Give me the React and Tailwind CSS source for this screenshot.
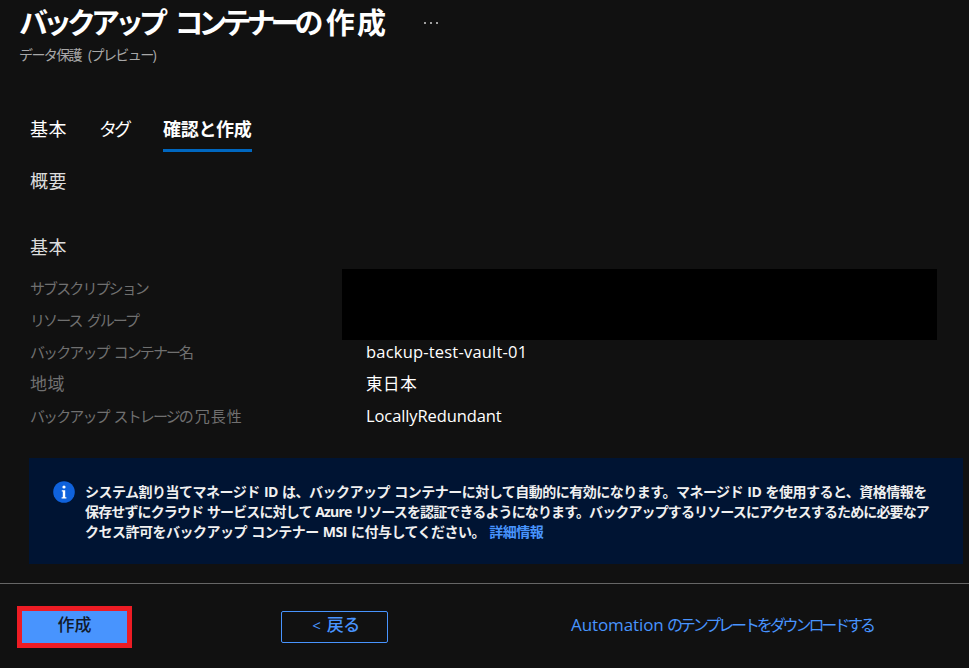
const FONT = "font-['Open_Sans','Noto_Sans_CJK_JP',sans-serif]";

function Row({ label, value, valueClass = "tracking-[0.1px]" }) {
  return (
    <div className="flex h-8 items-center">
      <div className="w-[336px] text-[15px] tracking-[-1.9px] whitespace-pre text-[#707070] [word-spacing:3px]">{label}</div>
      <div className={`text-[16.5px] text-white ${valueClass}`}>{value}</div>
    </div>
  );
}

export default function App() {
  return (
    <div className={`${FONT} flex h-[668px] w-[969px] flex-col overflow-hidden bg-[#111111] text-white`}>
      <header className="flex items-start pl-[19px]">
        <div className="w-[367px]">
          <h1 className="h-[45px] text-[29px] leading-[45px] font-bold whitespace-pre">
            <span className="tracking-[-5px] [word-spacing:9px]">バックアップ コンテナー</span>
            <span className="tracking-[2.2px]">の作成</span>
          </h1>
          <p className="text-[14px] leading-[20px] tracking-[-1.6px] whitespace-pre text-[#a8a8a8] [word-spacing:5px]">データ保護 (プレビュー)</p>
        </div>
        <div className="ml-[38px] flex h-[45px] items-center gap-[4px]">
          <span className="size-[2px] rounded-full bg-[#d0d0d0]" />
          <span className="size-[2px] rounded-full bg-[#d0d0d0]" />
          <span className="size-[2px] rounded-full bg-[#d0d0d0]" />
        </div>
      </header>

      <nav className="mt-[41px] flex h-[46px] pl-[30px] text-[18px]">
        <div className="pt-[10px] leading-[26px] tracking-[0.5px]">基本</div>
        <div className="ml-[32px] w-[29px] pt-[10px] leading-[26px] tracking-[-3px] whitespace-nowrap">タグ</div>
        <div className="ml-[35px] w-[89px] border-b-[3px] border-[#0067c0] pt-[10px] leading-[26px] font-bold tracking-[-0.3px] whitespace-nowrap">確認と作成</div>
      </nav>

      <div className="mt-[16px] pl-[30px] text-[18px] leading-[26px] tracking-[0.5px] text-[#dddddd]">概要</div>
      <div className="mt-[40px] pl-[30px] text-[18px] leading-[26px] tracking-[0.5px] text-[#dddddd]">基本</div>

      <section className="relative mt-[12px] pl-[30px]">
        <Row label="サブスクリプション" value="" />
        <Row label="リソース グループ" value="" />
        <Row label="バックアップ コンテナー名" value="backup-test-vault-01" valueClass="tracking-[0.2px]" />
        <Row label={<span className="text-[17px] tracking-[0.5px]">地域</span>} value="東日本" valueClass="tracking-[0.6px]" />
        <Row
          label={<>バックアップ ストレージ<span className="tracking-[1px]">の冗長性</span></>}
          value="LocallyRedundant"
          valueClass="tracking-[-0.1px]"
        />
        <div className="absolute top-[-3px] left-[342px] h-[71px] w-[595px] bg-black" />
      </section>

      <section className="mt-[26px] ml-[29px] flex h-[106px] w-[934px] items-start bg-[#001433] pt-[23px] pl-[24px]">
        <svg viewBox="0 0 22 22" className="size-[22px] shrink-0">
          <circle cx="11" cy="11" r="10.8" fill="#0f62dc" />
          <circle cx="11" cy="6" r="1.6" fill="#fff" />
          <path d="M8.8 9.2h3.4v7h1.2v1.3H8.6v-1.3h1.2v-5.7h-1z" fill="#fff" />
        </svg>
        <p className="mt-[1px] ml-[10px] w-[860px] text-[14px] leading-[20px] font-bold whitespace-pre text-[#f0f0f0] [word-spacing:1px]">
          <span className="block tracking-[-0.5px]">システム割り当てマネージド ID は、バックアップ コンテナーに対して自動的に有効になります。マネージド ID を使用すると、資格情報を</span>
          <span className="block tracking-[-0.87px]">保存せずにクラウド サービスに対して Azure リソースを認証できるようになります。バックアップするリソースにアクセスするために必要なア</span>
          <span className="block tracking-[-0.5px]">クセス許可をバックアップ コンテナー MSI に付与してください。 <span className="text-[#4894fe]">詳細情報</span></span>
        </p>
      </section>

      <div className="mt-[19px] h-px bg-[#666666]" />

      <footer className="flex items-center pt-[22px] pl-[17px]">
        <div className="border-[5px] border-[#ed1c24]">
          <button className="flex h-[32px] w-[105px] items-center justify-center bg-[#4894fe] pb-[4px] text-[17px] font-medium text-[#111a2b]">作成</button>
        </div>
        <button className="ml-[149px] flex h-[32px] w-[107px] items-center justify-center gap-[6px] rounded-[2px] border border-[#4894fe] pb-[4px] pl-[3px] text-[17px] font-medium text-[#4894fe]">
          <span className="text-[15px]">&lt;</span><span className="tracking-[-0.5px]">戻る</span>
        </button>
        <a className="mb-[4px] ml-[183px] text-[16px] whitespace-pre text-[#4894fe]">
          <span className="text-[17px] tracking-[-0.1px] [word-spacing:-1px]">Automation </span><span className="tracking-[-3.1px]">のテンプレートをダウンロードする</span>
        </a>
      </footer>
    </div>
  );
}
